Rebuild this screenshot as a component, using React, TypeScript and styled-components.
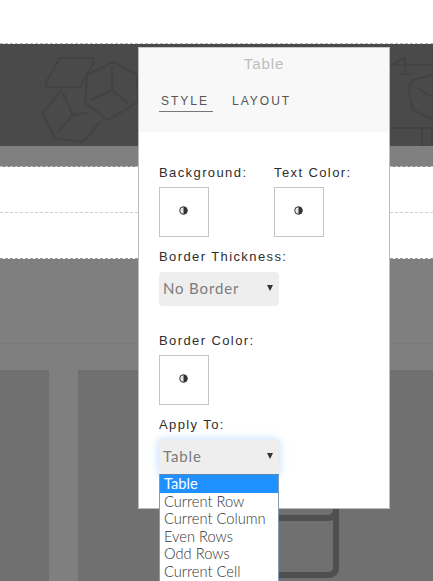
import * as React from 'react'

import styled, { createGlobalStyle } from 'styled-components'

const GlobalStyle = createGlobalStyle`
  html, body {
    margin: 0;
    padding: 0;
    background: #fff;
  }
  body {
    width: 433px;
    height: 581px;
    overflow: hidden;
    font-family: 'Liberation Sans', Arial, sans-serif;
  }
`

const Page = styled.div`
  position: relative;
  width: 433px;
  height: 581px;
  overflow: hidden;
  background: #fff;
`

const TopGap = styled.div`
  height: 43px;
  background: #fff;
  border-bottom: 1px dashed #bdbdbd;
`

const HeroBand = styled.div`
  height: 102px;
  background: #4a4a4a;
  overflow: hidden;
`

const HeroArt = styled.svg`
  display: block;
  width: 433px;
  height: 102px;
  fill: none;
  stroke: #434343;
  stroke-width: 2.2;
`

const GreyStrip = styled.div`
  height: 20px;
  background: #808080;
  border-bottom: 1px dashed #bdbdbd;
`

const TableRow = styled.div<{ $dashed?: boolean }>`
  height: 45px;
  background: #fff;
  border-bottom: 1px dashed ${(p) => (p.$dashed ? '#d0d0d0' : '#9a9a9a')};
`

const LowerArea = styled.div`
  height: 323px;
  background: #7f7f7f;
  display: flex;
  flex-direction: column;
`

const LowerHead = styled.div`
  height: 84px;
  border-bottom: 1px solid #7a7a7a;
`

const LowerSub = styled.div`
  height: 26px;
`

const ColumnRow = styled.div`
  flex: 1;
  display: grid;
  grid-template-columns: 49px 29px 1fr;
`

const Column = styled.div<{ $light?: boolean }>`
  background: ${(p) => (p.$light ? '#7f7f7f' : '#707070')};
`

const Modal = styled.div`
  position: absolute;
  left: 138px;
  top: 47px;
  width: 250px;
  height: 460px;
  background: #fff;
  border: 1px solid #bcbcbc;
  border-top-color: #c8c8c8;
`

const ModalHead = styled.div`
  height: 84px;
  background: #f8f8f8;
  display: flex;
  flex-direction: column;
`

const ModalTitle = styled.div`
  padding-top: 7px;
  text-align: center;
  font-size: 15px;
  line-height: 18px;
  letter-spacing: 0.9px;
  color: #bdbdbd;
`

const Tabs = styled.div`
  display: flex;
  gap: 17px;
  padding: 21px 0 0 20px;
`

const Tab = styled.div<{ $active?: boolean }>`
  padding: 0 4px 2px 2px;
  font-size: 12px;
  line-height: 15px;
  letter-spacing: 2px;
  color: #555;
  border-bottom: 1px solid ${(p) => (p.$active ? '#777' : 'transparent')};
`

const ModalBody = styled.div`
  padding: 33px 20px 0;
`

const SwatchRow = styled.div`
  display: grid;
  grid-template-columns: 115px 1fr;
`

const Field = styled.div`
  display: flex;
  flex-direction: column;
`

const Label = styled.div`
  font-size: 13px;
  line-height: 16px;
  letter-spacing: 1.4px;
  color: #2e2e2e;
`

const Swatch = styled.div`
  box-sizing: border-box;
  width: 50px;
  height: 50px;
  margin-top: 6px;
  padding: 18px 0 0 19px;
  background: #fff;
  border: 1px solid #c4c4c4;
`

const SwatchIcon = styled.svg`
  display: block;
  width: 9px;
  height: 9px;
`

const ThicknessField = styled(Field)`
  margin-top: 12px;
`

const BorderColorField = styled(Field)`
  margin-top: 27px;
`

const ApplyField = styled(Field)`
  margin-top: 12px;
`

const SelectBox = styled.div<{ $focused?: boolean }>`
  box-sizing: border-box;
  width: 120px;
  height: 34px;
  margin-top: 7px;
  padding: 0 6px 2px 4px;
  display: flex;
  align-items: center;
  justify-content: space-between;
  background: #eee;
  border-radius: 4px;
  font-family: 'Lato', sans-serif;
  font-size: 15px;
  letter-spacing: 0.85px;
  color: #7c7c7c;
  box-shadow: ${(p) => (p.$focused ? '0 0 7px 2px rgba(170, 210, 245, 0.55)' : 'none')};
`

const Caret = styled.span`
  width: 0;
  height: 0;
  border-left: 3px solid transparent;
  border-right: 3px solid transparent;
  border-top: 6px solid #333;
`

const OptionList = styled.ul`
  position: absolute;
  left: 159px;
  top: 474px;
  box-sizing: border-box;
  width: 120px;
  height: 107px;
  margin: 0;
  padding: 0;
  list-style: none;
  background: #fff;
  border: 1px solid #7f9db9;
  border-top-color: #5a86b5;
  border-bottom: 0;
  font-family: 'Lato', sans-serif;
  font-weight: 300;
  font-size: 14.7px;
`

const Option = styled.li<{ $selected?: boolean }>`
  height: 17.6px;
  padding-left: 4px;
  line-height: 17px;
  white-space: nowrap;
  background: ${(p) => (p.$selected ? '#1e90ff' : 'transparent')};
  color: ${(p) => (p.$selected ? '#fff' : '#333')};
  font-weight: ${(p) => (p.$selected ? 400 : 300)};
`

const TableIconFrame = styled.svg`
  position: absolute;
  left: 270px;
  top: 490px;
  width: 100px;
  height: 91px;
  fill: none;
  stroke: #4f4f4f;
  stroke-width: 6;
`

const ContrastIcon = () => (
  <SwatchIcon viewBox="0 0 18 18">
    <circle cx="9" cy="9" r="7.6" fill="#e8e8e8" stroke="#333" strokeWidth="2" />
    <path d="M9 1.4a7.6 7.6 0 0 1 0 15.2z" fill="#333" />
  </SwatchIcon>
)

const options = ['Table', 'Current Row', 'Current Column', 'Even Rows', 'Odd Rows', 'Current Cell']

const App: React.FC = () => {
  return (
    <Page>
      <GlobalStyle />
      <TopGap />
      <HeroBand>
        <HeroArt viewBox="0 0 433 102">
          <path d="M60 14h32l2 4-14 25H46v-5z" />
          <path d="M113 18l24 13 1 27-30 18-23-17 2-28z" />
          <path d="M112 23v23l-22 10M112 46l16 13" />
          <path d="M62 46l-20 23 13 25 28 4 17-20" />
          <path d="M63 49l10 22-15 17M73 71l14-2" />
          <path d="M405 13l-13 8h41M405 13v17M400 30h13" />
          <path d="M433 31l-20 5-5 8 5 22 20 10M417 44l16 9" />
          <path d="M390 84h43M422 84v18M432 84v18" />
        </HeroArt>
      </HeroBand>
      <GreyStrip />
      <TableRow $dashed />
      <TableRow />
      <LowerArea>
        <LowerHead />
        <LowerSub />
        <ColumnRow>
          <Column />
          <Column $light />
          <Column />
        </ColumnRow>
      </LowerArea>
      <TableIconFrame viewBox="0 0 100 91">
        <path d="M0 28h57q9 0 9-9" />
        <path d="M66 15v63q0 7-9 7H0" />
      </TableIconFrame>
      <Modal>
        <ModalHead>
          <ModalTitle>Table</ModalTitle>
          <Tabs>
            <Tab $active>STYLE</Tab>
            <Tab>LAYOUT</Tab>
          </Tabs>
        </ModalHead>
        <ModalBody>
          <SwatchRow>
            <Field>
              <Label>Background:</Label>
              <Swatch>
                <ContrastIcon />
              </Swatch>
            </Field>
            <Field>
              <Label>Text Color:</Label>
              <Swatch>
                <ContrastIcon />
              </Swatch>
            </Field>
          </SwatchRow>
          <ThicknessField>
            <Label>Border Thickness:</Label>
            <SelectBox>
              No Border
              <Caret />
            </SelectBox>
          </ThicknessField>
          <BorderColorField>
            <Label>Border Color:</Label>
            <Swatch>
              <ContrastIcon />
            </Swatch>
          </BorderColorField>
          <ApplyField>
            <Label>Apply To:</Label>
            <SelectBox $focused>
              Table
              <Caret />
            </SelectBox>
          </ApplyField>
        </ModalBody>
      </Modal>
      <OptionList>
        {options.map((o, i) => (
          <Option key={o} $selected={i === 0}>
            {o}
          </Option>
        ))}
      </OptionList>
    </Page>
  )
}

export default App
